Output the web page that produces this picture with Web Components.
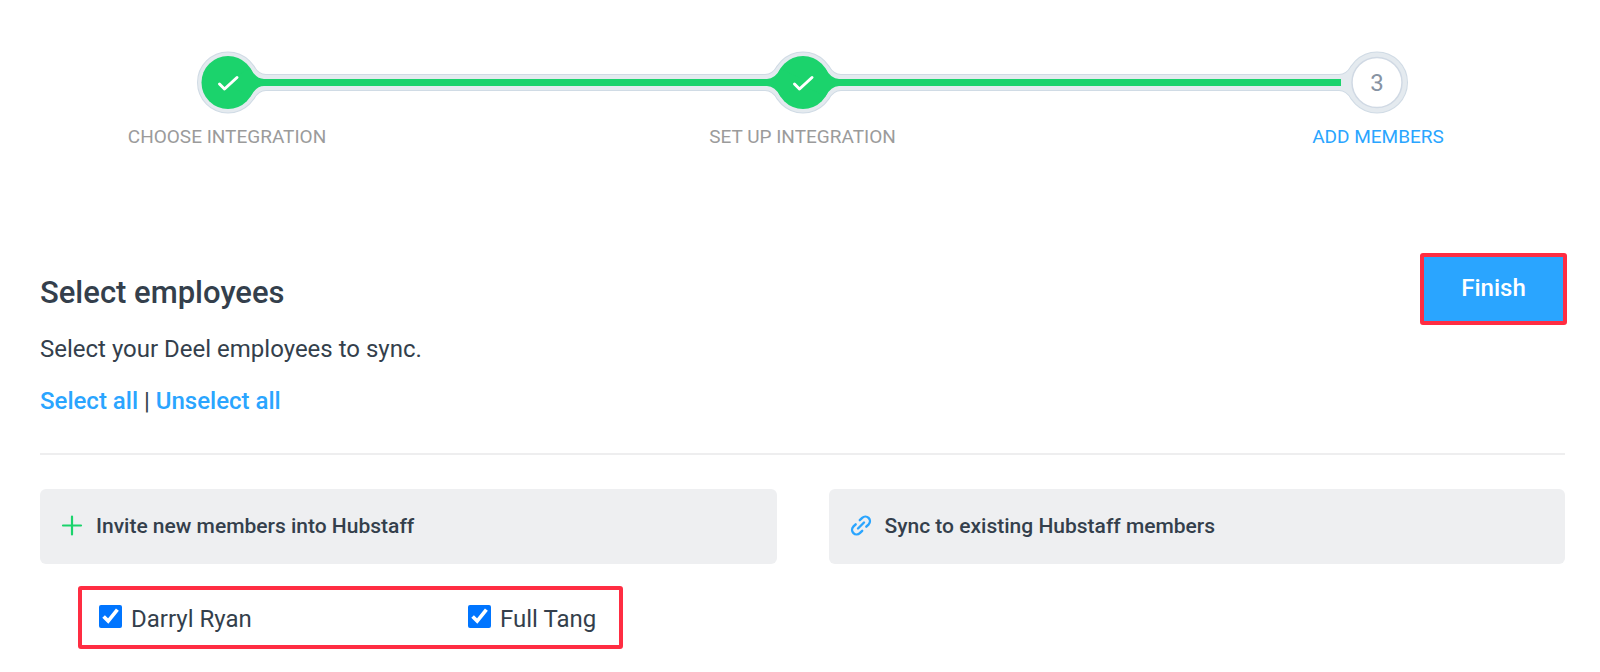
<!DOCTYPE html>
<html lang="en">
<head>
<meta charset="utf-8">
<title>Add members</title>
<style>
  body { margin: 0; background: #fff; color: #343f4c; font: 24px/32px Roboto, sans-serif; }
</style>
</head>
<body>
<members-page></members-page>

<template id="page-t">
  <style>
    :host { display: block; padding: 51px 33px 23px 40px; }
    header { display: flex; justify-content: space-between; align-items: flex-start; margin-top: 104px; }
    h1 { margin: 20px 0 0; font-size: 31px; line-height: 40px; font-weight: 500; }
    p { margin: 20px 0 0; }
    a { color: #2aa5ff; font-weight: 500; text-decoration: none; }
    hr { margin: 36px 2px 34px 0; border: 0; border-top: 2px solid #eeeeef; }
    .columns { display: grid; grid-template-columns: 1fr 1fr; gap: 52px; align-items: start; margin-right: 2px; }
    .people { display: grid; grid-template-columns: 369px auto; width: fit-content; box-sizing: border-box;
      margin: 22px 0 0 38px; padding: 12px 23px 12px 17px; border: 4px solid #ff2d42; border-radius: 3px; }
  </style>
  <step-progress></step-progress>
  <header>
    <div>
      <h1>Select employees</h1>
      <p>Select your Deel employees to sync.</p>
      <p><a href="#all">Select all</a> | <a href="#none">Unselect all</a></p>
    </div>
    <finish-button>Finish</finish-button>
  </header>
  <hr>
  <div class="columns">
    <section>
      <panel-title>
        <svg slot="icon" width="22" height="22" viewBox="0 0 22 22" fill="none" stroke="#1bd36c" stroke-width="2.200" stroke-linecap="round"><path d="M11 1.500v18M2 10.500h18"/></svg>
        Invite new members into Hubstaff
      </panel-title>
      <div class="people">
        <member-check>Darryl Ryan</member-check>
        <member-check>Full Tang</member-check>
      </div>
    </section>
    <section>
      <panel-title>
        <svg slot="icon" width="22" height="22" viewBox="0 0 22 22" fill="none" stroke="#2aa5ff" stroke-width="2.400" stroke-linecap="round"><path d="M8 13.500L14 7.500M9.800 5.200L12.200 2.800A4.600 4.600 0 0 1 18.700 9.300L16.300 11.700M12.200 15.800L9.800 18.200A4.600 4.600 0 0 1 3.300 11.700L5.700 9.300"/></svg>
        Sync to existing Hubstaff members
      </panel-title>
    </section>
  </div>
</template>

<template id="steps-t">
  <style>
    :host { display: block; }
    .track { display: flex; padding: 0 150px 0 148px; align-items: center; }
    svg { flex: none; display: block; }
    .bar { flex: 1; box-sizing: border-box; height: 17px; padding: 4px 0; background: #e4eaef; border: solid #d0dbe5; border-width: 1px 0; }
    .bar::before { content: ""; display: block; height: 7px; background: #1bd36c; }
    ol { display: flex; justify-content: space-between; margin: 11px 0 0; padding: 0 89px 0 87px; list-style: none;
      font-size: 19px; line-height: 24px; color: #9b9b9b; text-transform: uppercase; }
    li { width: 200px; text-align: center; white-space: nowrap; }
    li[aria-current] { color: #2aa5ff; }
    .edge { fill: #d0dbe5; stroke: #d0dbe5; stroke-width: 2; }
    .shell { fill: #e4eaef; }
    .done { fill: #1bd36c; }
    .check { fill: none; stroke: #fff; stroke-width: 3; stroke-linecap: round; stroke-linejoin: round; }
    text { font-size: 24px; fill: #8793a3; text-anchor: middle; }
  </style>
  <svg width="0" height="0" style="position:absolute" aria-hidden="true">
    <defs>
      <circle id="disc" r="30"/>
      <path id="arm" d="M0-7.500H42V7.500H0zM25.500-16Q30.500-7.500 38-7.500V7.500Q30.500 7.500 25.500 16L0 7V-7z"/>
      <path id="fill" d="M0-3.500H42V3.500H0zM22.500-14Q28-3.500 36-3.500V3.500Q28 3.500 22.500 14L0 3V-3z"/>
    </defs>
  </svg>
  <div class="track">
    <svg width="80" height="63" viewBox="-40 -31.500 80 63">
      <g class="edge"><use href="#disc"/><use href="#arm"/></g>
      <g class="shell"><use href="#disc"/><use href="#arm"/></g>
      <g class="done"><circle r="26.500"/><use href="#fill"/></g>
      <path class="check" d="M-8.500 1.500L-3.500 6.500L9-5"/>
    </svg>
    <div class="bar"></div>
    <svg width="80" height="63" viewBox="-40 -31.500 80 63">
      <g class="edge"><use href="#disc"/><use href="#arm"/><use href="#arm" transform="scale(-1 1)"/></g>
      <g class="shell"><use href="#disc"/><use href="#arm"/><use href="#arm" transform="scale(-1 1)"/></g>
      <g class="done"><circle r="26.500"/><use href="#fill"/><use href="#fill" transform="scale(-1 1)"/></g>
      <path class="check" d="M-8.500 1.500L-3.500 6.500L9-5"/>
    </svg>
    <div class="bar"></div>
    <svg width="80" height="63" viewBox="-40 -31.500 80 63">
      <g class="edge"><use href="#disc"/><use href="#arm" transform="scale(-1 1)"/></g>
      <g class="shell"><use href="#disc"/><use href="#arm" transform="scale(-1 1)"/></g>
      <path class="done" d="M-40-3.500h4v7h-4z"/>
      <circle r="25" fill="#fff" stroke="#d0d9e4" stroke-width="1.500"/>
      <text y="8">3</text>
    </svg>
  </div>
  <ol>
    <li>Choose integration</li>
    <li>Set up integration</li>
    <li aria-current="step">Add members</li>
  </ol>
</template>

<template id="button-t">
  <style>
    :host { display: block; }
    button { display: block; width: 147px; height: 72px; margin: 0; padding: 0 0 2px; border: 4px solid #ff2d42; border-radius: 3px;
      background: #2aa5ff; color: #fff; font: inherit; font-weight: 500; }
  </style>
  <button type="button"><slot></slot></button>
</template>

<template id="title-t">
  <style>
    :host { display: block; }
    h2 { display: flex; align-items: center; gap: 13px; margin: 0; padding: 21px 21px 22px; background: #eeeff1; border-radius: 6px;
      font-size: 21px; line-height: 32px; font-weight: 500; }
    ::slotted(svg) { display: block; }
  </style>
  <h2><slot name="icon"></slot><span><slot></slot></span></h2>
</template>

<template id="check-t">
  <style>
    :host { display: block; }
    label { display: flex; align-items: flex-start; gap: 9px; line-height: 31px; white-space: nowrap; padding-top: 1px; }
    input { width: 23px; height: 23px; margin: 2px 0 0; accent-color: #0075ff; }
    span { padding-top: 2px; line-height: 28px; }
  </style>
  <label><input type="checkbox" checked><span><slot></slot></span></label>
</template>

<script>
  const define = (name, id) => customElements.define(name, class extends HTMLElement {
    constructor() {
      super();
      this.attachShadow({ mode: 'open' }).append(document.getElementById(id).content.cloneNode(true));
    }
  });
  define('step-progress', 'steps-t');
  define('finish-button', 'button-t');
  define('panel-title', 'title-t');
  define('member-check', 'check-t');
  define('members-page', 'page-t');
</script>
</body>
</html>
